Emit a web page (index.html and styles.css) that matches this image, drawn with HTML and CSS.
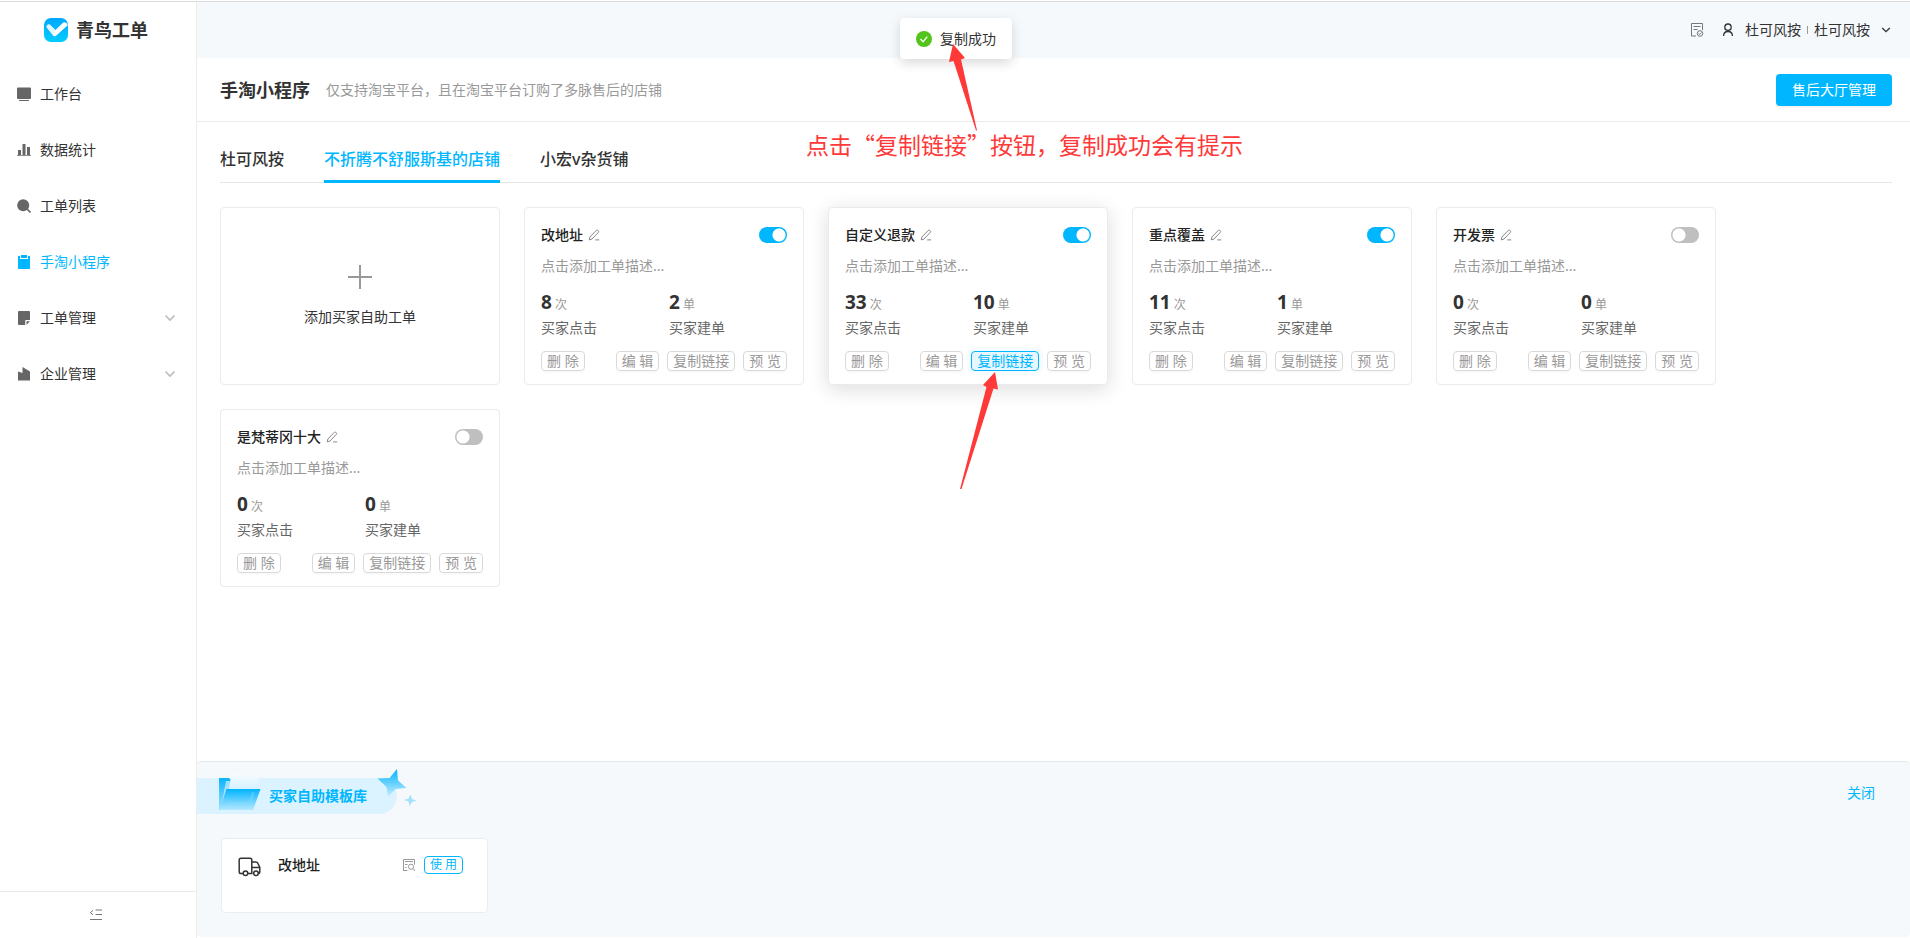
FILE: index.html
```html
<!DOCTYPE html>
<html lang="zh-CN">
<head>
<meta charset="utf-8">
<title>青鸟工单</title>
<meta name="viewport" content="width=device-width, initial-scale=1">
<link rel="stylesheet" href="styles.css">
</head>
<body>
<svg class="sprite" aria-hidden="true">
  <symbol id="pen" viewBox="0 0 12 12"><path d="M1.2 10.9 1.9 8 8.4 1.3q.7-.6 1.4 0l.6.6q.6.7 0 1.4L4 10zM7.2 10.9h4" fill="none" stroke="currentColor" stroke-linejoin="round"/></symbol>
  <symbol id="down" viewBox="0 0 12 12"><path d="m1.5 3.5 4.5 4.5 4.5-4.5" fill="none" stroke="currentColor" stroke-width="1.6"/></symbol>
</svg>
<div class="app">
  <aside class="sidebar">
    <div class="brand">
      <svg width="24" height="24" viewBox="0 0 24 24" aria-hidden="true">
        <defs><linearGradient id="lg" x1="0" y1="0" x2="0" y2="1"><stop offset="0" stop-color="#00a8ff"/><stop offset="1" stop-color="#00ccff"/></linearGradient></defs>
        <rect width="24" height="24" rx="7" fill="url(#lg)"/>
        <path d="M2.6 9.400Q1.800 7.200 3.900 6.400 5.500 5.900 6.700 7.200L12 12.500 14.500 15 11 18.300Q9.700 18.400 9 17.600z" fill="#e4f6ff"/>
        <path d="M9 17.600Q10.800 19.200 12.600 17.200L23.800 7.200Q22.500 3.600 19.200 4.400L11 12.600z" fill="#fff"/>
      </svg>
      <span>青鸟工单</span>
    </div>
    <nav class="menu">
      <a href="#"><svg viewBox="0 0 14 14"><path d="M1 .5h12q1 0 1 1V11q0 1-1 1H1q-1 0-1-1V1.500q0-1 1-1zM2 13h10v1H2z" fill="currentColor"/></svg><span>工作台</span></a>
      <a href="#"><svg viewBox="0 0 14 14"><path d="M1 7h3v5H1zM5.500 1h3v11h-3zM10 4h3v8h-3zM0 12h14v.8H0z" fill="currentColor"/></svg><span>数据统计</span></a>
      <a href="#"><svg viewBox="0 0 14 14"><circle cx="6.200" cy="6.200" r="6" fill="currentColor"/><path d="m10 10 3.500 3.500" stroke="currentColor" stroke-width="1.600"/></svg><span>工单列表</span></a>
      <a href="#" class="current" aria-current="page"><svg viewBox="0 0 14 14"><path d="M1 1h2v3h8V1h2v13H1zM4 0h6v3H4z" fill="currentColor"/></svg><span>手淘小程序</span></a>
      <a href="#"><svg viewBox="0 0 14 14"><path d="M1 1q0-1 1-1h10q1 0 1 1v8H9q-.8 0-.8.800V14H2q-1 0-1-1zM9.500 10.200H13L9.500 13.700z" fill="currentColor"/></svg><span>工单管理</span><svg class="fold"><use href="#down"/></svg></a>
      <a href="#"><svg viewBox="0 0 14 14"><path d="M1 4.500 5.500 6V0L13 4.500V13.500H1z" fill="currentColor"/></svg><span>企业管理</span><svg class="fold"><use href="#down"/></svg></a>
    </nav>
    <button class="collapse" aria-label="收起菜单"><svg width="14" height="14" viewBox="0 0 14 14"><path d="M6.500 2H13M6.500 6.500H13M1 11.500h12M4 2.500 1.300 4.600 4 6.700" fill="none" stroke="currentColor"/></svg></button>
  </aside>

  <main class="main">
    <header class="topbar">
      <svg class="log" width="14" height="16" viewBox="0 0 14 16"><path d="M6 14H1.500V1.500h11V8M3.500 4.500h7M3.500 7.500h4" fill="none" stroke="currentColor"/><circle cx="10" cy="11.500" r="2.800" fill="none" stroke="currentColor"/><path d="m8.500 11.500 1.200 1 2-2" fill="none" stroke="currentColor"/></svg>
      <button class="account">
        <svg width="12" height="14" viewBox="0 0 12 14"><circle cx="6" cy="4.200" r="3.200" fill="none" stroke="currentColor" stroke-width="1.300"/><path d="M1.500 13Q1.700 8.500 6 8.500T10.500 13" fill="none" stroke="currentColor" stroke-width="1.300"/></svg>
        <span>杜可风按</span><i class="bar"></i><span>杜可风按</span>
        <svg class="caret" width="10" height="10"><use href="#down"/></svg>
      </button>
    </header>

    <div class="heading">
      <h1>手淘小程序</h1>
      <p>仅支持淘宝平台，且在淘宝平台订购了多脉售后的店铺</p>
      <button class="primary">售后大厅管理</button>
    </div>

    <section class="content">
      <div class="tabs" role="tablist">
        <button role="tab">杜可风按</button>
        <button role="tab" class="selected" aria-selected="true">不折腾不舒服斯基的店铺</button>
        <button role="tab">小宏v杂货铺</button>
      </div>
      <div class="cards">
        <button class="card add">
          <svg width="26" height="26" viewBox="0 0 26 26"><path d="M13 1v24M1 13h24" stroke="currentColor" stroke-width="2"/></svg>
          <span>添加买家自助工单</span>
        </button>

        <article class="card">
          <div class="card-head"><h2>改地址</h2><svg class="pen"><use href="#pen"/></svg><input type="checkbox" class="switch" aria-label="启用改地址" checked></div>
          <p class="desc">点击添加工单描述...</p>
          <dl class="stats"><div><dd><b>8</b> 次</dd><dt>买家点击</dt></div><div><dd><b>2</b> 单</dd><dt>买家建单</dt></div></dl>
          <div class="actions"><button>删 除</button><button>编 辑</button><button>复制链接</button><button>预 览</button></div>
        </article>

        <article class="card raised">
          <div class="card-head"><h2>自定义退款</h2><svg class="pen"><use href="#pen"/></svg><input type="checkbox" class="switch" aria-label="启用自定义退款" checked></div>
          <p class="desc">点击添加工单描述...</p>
          <dl class="stats"><div><dd><b>33</b> 次</dd><dt>买家点击</dt></div><div><dd><b>10</b> 单</dd><dt>买家建单</dt></div></dl>
          <div class="actions"><button>删 除</button><button>编 辑</button><button class="pressed">复制链接</button><button>预 览</button></div>
          <svg class="pointer" width="40" height="120" viewBox="0 0 40 120" aria-hidden="true"><path d="M35 1 38 18.500 33.500 17.500 1.500 118H0L26.500 16 23 14z" fill="#ff3838"/></svg>
        </article>

        <article class="card">
          <div class="card-head"><h2>重点覆盖</h2><svg class="pen"><use href="#pen"/></svg><input type="checkbox" class="switch" aria-label="启用重点覆盖" checked></div>
          <p class="desc">点击添加工单描述...</p>
          <dl class="stats"><div><dd><b>11</b> 次</dd><dt>买家点击</dt></div><div><dd><b>1</b> 单</dd><dt>买家建单</dt></div></dl>
          <div class="actions"><button>删 除</button><button>编 辑</button><button>复制链接</button><button>预 览</button></div>
        </article>

        <article class="card">
          <div class="card-head"><h2>开发票</h2><svg class="pen"><use href="#pen"/></svg><input type="checkbox" class="switch" aria-label="启用开发票"></div>
          <p class="desc">点击添加工单描述...</p>
          <dl class="stats"><div><dd><b>0</b> 次</dd><dt>买家点击</dt></div><div><dd><b>0</b> 单</dd><dt>买家建单</dt></div></dl>
          <div class="actions"><button>删 除</button><button>编 辑</button><button>复制链接</button><button>预 览</button></div>
        </article>

        <article class="card">
          <div class="card-head"><h2>是梵蒂冈十大</h2><svg class="pen"><use href="#pen"/></svg><input type="checkbox" class="switch" aria-label="启用是梵蒂冈十大"></div>
          <p class="desc">点击添加工单描述...</p>
          <dl class="stats"><div><dd><b>0</b> 次</dd><dt>买家点击</dt></div><div><dd><b>0</b> 单</dd><dt>买家建单</dt></div></dl>
          <div class="actions"><button>删 除</button><button>编 辑</button><button>复制链接</button><button>预 览</button></div>
        </article>
      </div>
    </section>

    <section class="library">
      <div class="library-head">
        <div class="ribbon">
          <svg class="folder" width="44" height="40" viewBox="0 0 44 40" aria-hidden="true">
            <defs>
              <linearGradient id="f1" x1="0" y1="0" x2="0" y2="1"><stop offset="0" stop-color="#08b4ff"/><stop offset="1" stop-color="#9fe0ff"/></linearGradient>
              <linearGradient id="f2" x1="0" y1="0" x2="0" y2="1"><stop offset="0" stop-color="#00b4ff"/><stop offset="1" stop-color="#b5e8ff"/></linearGradient>
              <linearGradient id="f3" x1="0" y1="0" x2="0" y2="1"><stop offset="0" stop-color="#f7fcff"/><stop offset="1" stop-color="#bdeaff"/></linearGradient>
            </defs>
            <path d="M1 4h10l2 2v30H1z" fill="url(#f1)"/>
            <path d="M8 7h12v26H3z" fill="#bfeaff" opacity=".8"/>
            <path d="M13.500 0 41.500 1 38 26H9z" fill="url(#f3)"/>
            <path d="M8.500 15H42.500L35 36H1.500z" fill="url(#f2)"/>
            <path d="M34 18 31 28.500H11L10 31H32.500L36.500 18z" fill="#8fdcff" opacity=".4"/>
          </svg>
          <h2>买家自助模板库</h2>
          <svg class="stars" width="40" height="40" viewBox="0 0 40 40" aria-hidden="true">
            <defs><linearGradient id="s1" x1="0" y1="0" x2="0" y2="1"><stop offset="0" stop-color="#00b4ff"/><stop offset="1" stop-color="#c9edff"/></linearGradient></defs>
            <path d="M20 1 21 12.500 29.500 20 18.500 21 11 29 9.500 19 .5 10.500 12.500 10z" fill="url(#s1)"/>
            <path d="m33.500 26.500 1.500 4.500 4.500 1.500-4.500 1.500-2.500 4-1-4.500-4.500-1.500 4.500-1.500z" fill="#a5e0fb"/>
          </svg>
        </div>
        <button class="close">关闭</button>
      </div>
      <article class="template">
        <svg width="24" height="20" viewBox="0 0 24 20" aria-hidden="true"><g fill="none" stroke="#333" stroke-width="1.500"><path d="M5 16.500H3q-1.800 0-1.800-1.800V3Q1.200 1.200 3 1.200h9Q13.800 1.200 13.800 3v13.500H10M13.800 5h4q1.400 0 2 1.300l2 4.200V14.700q0 1.800-1.800 1.800M13.800 10.500h8"/><circle cx="7.500" cy="16.300" r="2.300"/><circle cx="18" cy="16.300" r="2.300"/></g></svg>
        <h3>改地址</h3>
        <svg class="preview" width="14" height="14" viewBox="0 0 14 14"><path d="M5.500 12.500H1.500V1.500h11v5M3 3.500h8M3 6.500h2.500M3 9.500h1.500M11 10.500l2 2.500M1 12.500h3" fill="none" stroke="currentColor"/><circle cx="9" cy="8.700" r="2.600" fill="none" stroke="currentColor"/></svg>
        <button>使 用</button>
      </article>
    </section>
  </main>
</div>

<div class="toast" role="status">
  <svg width="16" height="16" viewBox="0 0 16 16"><circle cx="8" cy="8" r="8" fill="#52c41a"/><path d="m4.500 8 2.600 2.700 4.200-5" fill="none" stroke="#fff" stroke-width="1.300"/></svg>
  <span>复制成功</span>
</div>
<div class="note">
  <svg width="30" height="88" viewBox="0 0 30 88" aria-hidden="true"><path d="M5 1 17 15 13 16.500 29 87.500H28L5.500 18 1 19z" fill="#ff3838"/></svg>
  <p>点击“复制链接”按钮，复制成功会有提示</p>
</div>
</body>
</html>
```

FILE: styles.css
```css
* { box-sizing: border-box; }

body {
  margin: 0;
  font-family: "Noto Sans", "Noto Sans CJK SC", sans-serif;
  font-size: 14px;
  line-height: 22px;
  color: #333;
  background: #fff;
  position: relative;
}

h1, h2, h3, p, dl, dd, dt { margin: 0; }

button {
  font: inherit;
  color: inherit;
  background: none;
  border: 0;
  padding: 0;
  cursor: pointer;
}

svg { flex: none; display: block; }
.sprite { display: none; }

.app {
  display: flex;
  min-height: 100vh;
  padding-top: 2px;
  background: linear-gradient(#fff 1px, #dcdcdc 1px, #dcdcdc 2px, #fff 2px);
}

/* sidebar */
.sidebar {
  flex: none;
  width: 197px;
  display: flex;
  flex-direction: column;
  border-right: 1px solid #eaecee;
}

.brand {
  display: flex;
  align-items: center;
  gap: 8px;
  height: 56px;
  padding-left: 44px;
  font-size: 18px;
  font-weight: 700;
}

.menu { padding-top: 8px; flex: 1; }

.menu a {
  display: flex;
  align-items: center;
  height: 56px;
  padding: 0 20px 0 17px;
  gap: 9px;
  color: #333;
  text-decoration: none;
}

.menu svg { width: 14px; height: 14px; color: #666; }
.menu .fold { width: 12px; height: 12px; margin-left: auto; color: #bbb; }
.menu .current, .menu .current svg { color: #00b7ff; }

.collapse {
  height: 47px;
  padding-right: 4px;
  border-top: 1px solid #e8e8e8;
  color: #777;
  display: flex;
  align-items: center;
  justify-content: center;
}

/* main column */
.main { flex: 1; min-width: 0; display: flex; flex-direction: column; padding-bottom: 1px; }

.topbar {
  display: flex;
  align-items: center;
  justify-content: flex-end;
  gap: 18px;
  height: 56px;
  padding-right: 19px;
  background: #f5f9fc;
}

.log { color: #777; }
.account { display: flex; align-items: center; }
.account span { margin-left: 11px; }
.account .bar { width: 1px; height: 8px; margin-left: 6px; background: #999; }
.account .bar + span { margin-left: 6px; }
.account .caret { margin-left: 11px; }

.heading {
  display: flex;
  align-items: center;
  gap: 16px;
  height: 64px;
  padding: 0 18px 0 23px;
  border-bottom: 1px solid #ebebeb;
}

.heading h1 { font-size: 18px; font-weight: 700; }
.heading p { color: #999; }

.primary {
  height: 32px;
  margin-left: auto;
  padding: 0 16px;
  border-radius: 4px;
  color: #fff;
  background: #00b7ff;
  box-shadow: 0 2px 0 rgba(0, 0, 0, 0.04);
}

.content { flex: 1; padding: 0 18px 24px 23px; }

.tabs {
  display: flex;
  gap: 40px;
  box-shadow: inset 0 -1px #e6e6e6;
}

.tabs button {
  padding: 25px 0 9px;
  border-bottom: 3px solid transparent;
  font-size: 16px;
  font-weight: 500;
  line-height: 24px;
}

.tabs .selected { color: #00b7ff; border-color: #00b7ff; }

.cards {
  display: grid;
  grid-template-columns: repeat(auto-fill, 280px);
  gap: 24px;
  padding-top: 24px;
}

.card {
  position: relative;
  padding: 16px 16px 13px;
  border: 1px solid #ebebeb;
  border-radius: 4px;
  background: #fff;
}

.raised { box-shadow: 0 4px 20px rgba(0, 0, 0, 0.14); }

.add {
  display: flex;
  flex-direction: column;
  align-items: center;
  justify-content: center;
  gap: 16px;
  padding: 16px;
}

.add svg { color: #999; }

.card-head { display: flex; align-items: center; height: 22px; }
.card-head h2 { font-size: 14px; font-weight: 500; line-height: 20px; color: #222; }
.pen { width: 12px; height: 12px; margin-left: 5px; color: #888; }

.switch {
  appearance: none;
  width: 28px;
  height: 16px;
  margin: 0 0 0 auto;
  border-radius: 8px;
  background: radial-gradient(circle at 8px 8px, #fff 6px, transparent 7px) #bfbfbf;
}

.switch:checked {
  background: radial-gradient(circle at 20px 8px, #fff 6px, transparent 7px) #00b7ff;
}

.desc { margin-top: 9px; color: #999; }

.stats { display: flex; margin-top: 12px; }
.stats div { flex: none; width: 128px; }
.stats dd { height: 28px; font-size: 12px; line-height: 26px; color: #999; }
.stats b { font-size: 19px; font-weight: 700; color: #333; }
.stats dt { color: #666; }

.actions { display: flex; gap: 8px; margin-top: 12px; }

.actions button {
  height: 20px;
  padding: 0 5px;
  border: 1px solid #d9d9d9;
  border-radius: 4px;
  line-height: 18px;
  color: #999;
  white-space: nowrap;
  box-shadow: 0 2px 0 rgba(0, 0, 0, 0.02);
}

.actions button:first-child { margin-right: auto; }

.actions .pressed {
  color: #00b7ff;
  border-color: #00b7ff;
  background: #e6f7ff;
  box-shadow: 0 0 0 4px #f5fcff;
}

.pointer { position: absolute; left: 131px; top: 163px; z-index: 2; }

/* template library */
.library {
  padding: 16px 25px 24px 0;
  border-top: 1px solid #e6e9ec;
  border-radius: 4px;
  background: #f5f9fc;
}

.library-head { display: flex; align-items: flex-start; justify-content: space-between; }

.ribbon {
  position: relative;
  display: flex;
  align-items: center;
  width: 200px;
  height: 36px;
  padding-left: 72px;
  border-radius: 0 18px 18px 0;
  background: #dbf2ff;
}

.ribbon h2 { font-size: 14px; font-weight: 700; color: #00b7ff; white-space: nowrap; }
.folder { position: absolute; left: 21px; top: -4px; }
.stars { position: absolute; left: 180px; top: -10px; }
.close { padding: 4px 10px; color: #00b7ff; }

.template {
  display: flex;
  align-items: flex-start;
  width: 267px;
  min-height: 75px;
  margin: 24px 0 0 24px;
  padding: 17px 24px 16px 16px;
  border: 1px solid #ebedf0;
  border-radius: 4px;
  background: #fff;
}

.template > svg { margin-top: 1px; }
.template h3 { margin-left: 16px; font-size: 14px; font-weight: 500; line-height: 18px; color: #222; }
.template .preview { margin: 2px 8px 0 auto; color: #999; }

.template button {
  height: 18px;
  padding: 0 5px;
  border: 1px solid #00b7ff;
  border-radius: 4px;
  font-size: 12px;
  line-height: 16px;
  color: #00b7ff;
}

/* floating message */
.toast {
  position: absolute;
  top: 18px;
  left: 50%;
  margin-left: -55px;
  display: flex;
  align-items: center;
  gap: 8px;
  height: 41px;
  padding: 0 16px;
  border-radius: 4px;
  background: #fff;
  box-shadow: 0 4px 12px rgba(0, 0, 0, 0.15);
}

.note {
  position: absolute;
  top: 43px;
  left: 50%;
  margin-left: -149px;
  font-family: "Noto Sans CJK SC", sans-serif;
  font-size: 23px;
  line-height: 26px;
  color: #ff3838;
  white-space: nowrap;
}

.note svg { margin-left: 142px; }
```
